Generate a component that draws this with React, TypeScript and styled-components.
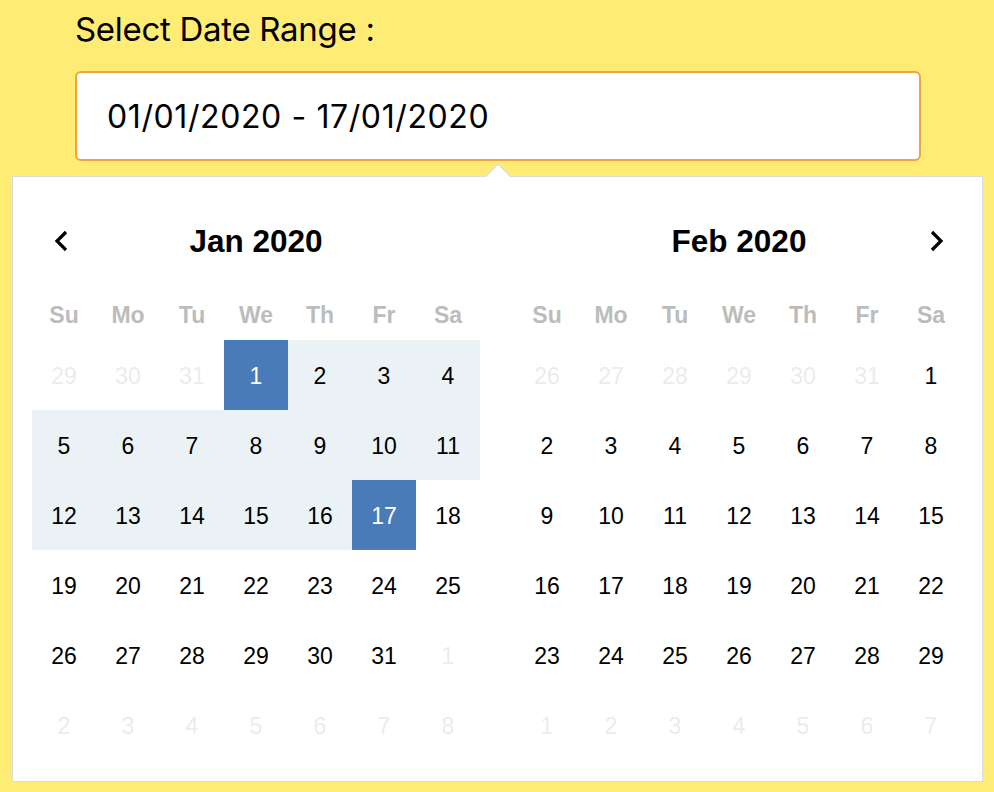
import styled, { createGlobalStyle } from 'styled-components';

const GlobalStyle = createGlobalStyle`
	html, body {
		margin: 0;
		padding: 0;
		background: #ffec74;
	}
	body {
		font-family: 'Liberation Sans', Arial, sans-serif;
		color: #000;
	}
`;

type Cell = { day: number; off?: boolean; start?: boolean; end?: boolean; inRange?: boolean };

const weekDays = ['Su', 'Mo', 'Tu', 'We', 'Th', 'Fr', 'Sa'];

const buildMonth = (
	firstWeekday: number,
	length: number,
	prevLength: number,
	range?: [number, number],
): Cell[] => {
	const cells: Cell[] = [];
	for (let i = firstWeekday - 1; i >= 0; i--) {
		cells.push({ day: prevLength - i, off: true });
	}
	for (let d = 1; d <= length; d++) {
		const cell: Cell = { day: d };
		if (range) {
			if (d === range[0]) cell.start = true;
			else if (d === range[1]) cell.end = true;
			else if (d > range[0] && d < range[1]) cell.inRange = true;
		}
		cells.push(cell);
	}
	let next = 1;
	while (cells.length < 42) {
		cells.push({ day: next++, off: true });
	}
	return cells;
};

const months = [
	{ title: 'Jan 2020', cells: buildMonth(3, 31, 31, [1, 17]), nav: 'prev' as const },
	{ title: 'Feb 2020', cells: buildMonth(6, 29, 31), nav: 'next' as const },
];

const Chevron = ({ dir }: { dir: 'prev' | 'next' }) => (
	<svg width="18" height="24" viewBox="0 0 18 24">
		<polyline
			points={dir === 'prev' ? '14,3 5,12 14,21' : '4,3 13,12 4,21'}
			fill="none"
			stroke="#000"
			strokeWidth="3.2"
		/>
	</svg>
);

export const App = () => {
	return (
		<Page>
			<GlobalStyle />
			<Label>Select Date Range :</Label>
			<DateInput readOnly value="01/01/2020 - 17/01/2020" />

			<Popup>
				{months.map(({ title, cells, nav }) => (
					<Month key={title}>
						<MonthHeader>
							<NavSlot>{nav === 'prev' && <Chevron dir="prev" />}</NavSlot>
							<MonthTitle>{title}</MonthTitle>
							<NavSlot $right>{nav === 'next' && <Chevron dir="next" />}</NavSlot>
						</MonthHeader>

						<WeekRow>
							{weekDays.map((w) => (
								<WeekDay key={w}>{w}</WeekDay>
							))}
						</WeekRow>

						<DayGrid>
							{cells.map((c, idx) => (
								<Day
									key={idx}
									$off={c.off}
									$selected={c.start || c.end}
									$inRange={c.inRange}
								>
									{c.day}
								</Day>
							))}
						</DayGrid>
					</Month>
				))}
			</Popup>
		</Page>
	);
};

export default App;

const Page = styled.div`
	display: flex;
	flex-direction: column;
	align-items: flex-start;
	padding: 9px 0 0 12px;
	min-height: 792px;
	box-sizing: border-box;
`;

const Label = styled.label`
	margin-left: 63px;
	font-family: Inter, 'Liberation Sans', sans-serif;
	font-size: 33px;
	line-height: 40px;
	letter-spacing: -0.3px;
`;

const DateInput = styled.input`
	margin: 22px 0 0 63px;
	width: 846px;
	height: 90px;
	box-sizing: border-box;
	border: 2px solid #f2a43c;
	border-radius: 6px;
	background: #fff;
	padding: 0 0 0 30px;
	font-family: Inter, 'Liberation Sans', sans-serif;
	font-size: 32px;
	letter-spacing: 0.6px;
	color: #000;
	outline: none;
`;

const Popup = styled.div`
	position: relative;
	margin-top: 15px;
	display: flex;
	gap: 35px;
	padding: 32px 19px 21px 19px;
	background: #fff;
	border: 1px solid #dcdcdc;

	&::before,
	&::after {
		content: '';
		position: absolute;
		width: 0;
		height: 0;
		border-style: solid;
		border-color: transparent;
	}

	&::before {
		top: -14px;
		left: 472px;
		border-width: 0 13px 13px 13px;
		border-bottom-color: #dcdcdc;
	}

	&::after {
		top: -12px;
		left: 473px;
		border-width: 0 12px 12px 12px;
		border-bottom-color: #fff;
	}
`;

const Month = styled.div`
	width: 448px;
	display: flex;
	flex-direction: column;
`;

const MonthHeader = styled.div`
	display: grid;
	grid-template-columns: 64px 1fr 64px;
	align-items: center;
	height: 64px;
`;

const NavSlot = styled.div<{ $right?: boolean }>`
	display: flex;
	align-items: center;
	justify-content: ${({ $right }) => ($right ? 'flex-end' : 'flex-start')};
	padding: ${({ $right }) => ($right ? '0 17px 0 0' : '0 0 0 20px')};
	height: 24px;
`;

const MonthTitle = styled.h2`
	margin: 0;
	text-align: center;
	font-size: 31.5px;
	font-weight: 700;
`;

const WeekRow = styled.div`
	display: grid;
	grid-template-columns: repeat(7, 64px);
	margin-top: 17px;
	height: 50px;
	align-items: center;
`;

const WeekDay = styled.span`
	text-align: center;
	font-size: 23px;
	font-weight: 700;
	color: #bcbcbc;
`;

const DayGrid = styled.div`
	display: grid;
	grid-template-columns: repeat(7, 64px);
	grid-auto-rows: 70px;
`;

const Day = styled.div<{ $off?: boolean; $selected?: boolean; $inRange?: boolean }>`
	display: flex;
	align-items: center;
	justify-content: center;
	padding-top: 2px;
	font-size: 23px;
	color: ${({ $off, $selected }) => ($selected ? '#fff' : $off ? '#ececec' : '#000')};
	background: ${({ $selected, $inRange }) =>
		$selected ? '#497bb8' : $inRange ? '#ebf2f6' : 'transparent'};
`;
